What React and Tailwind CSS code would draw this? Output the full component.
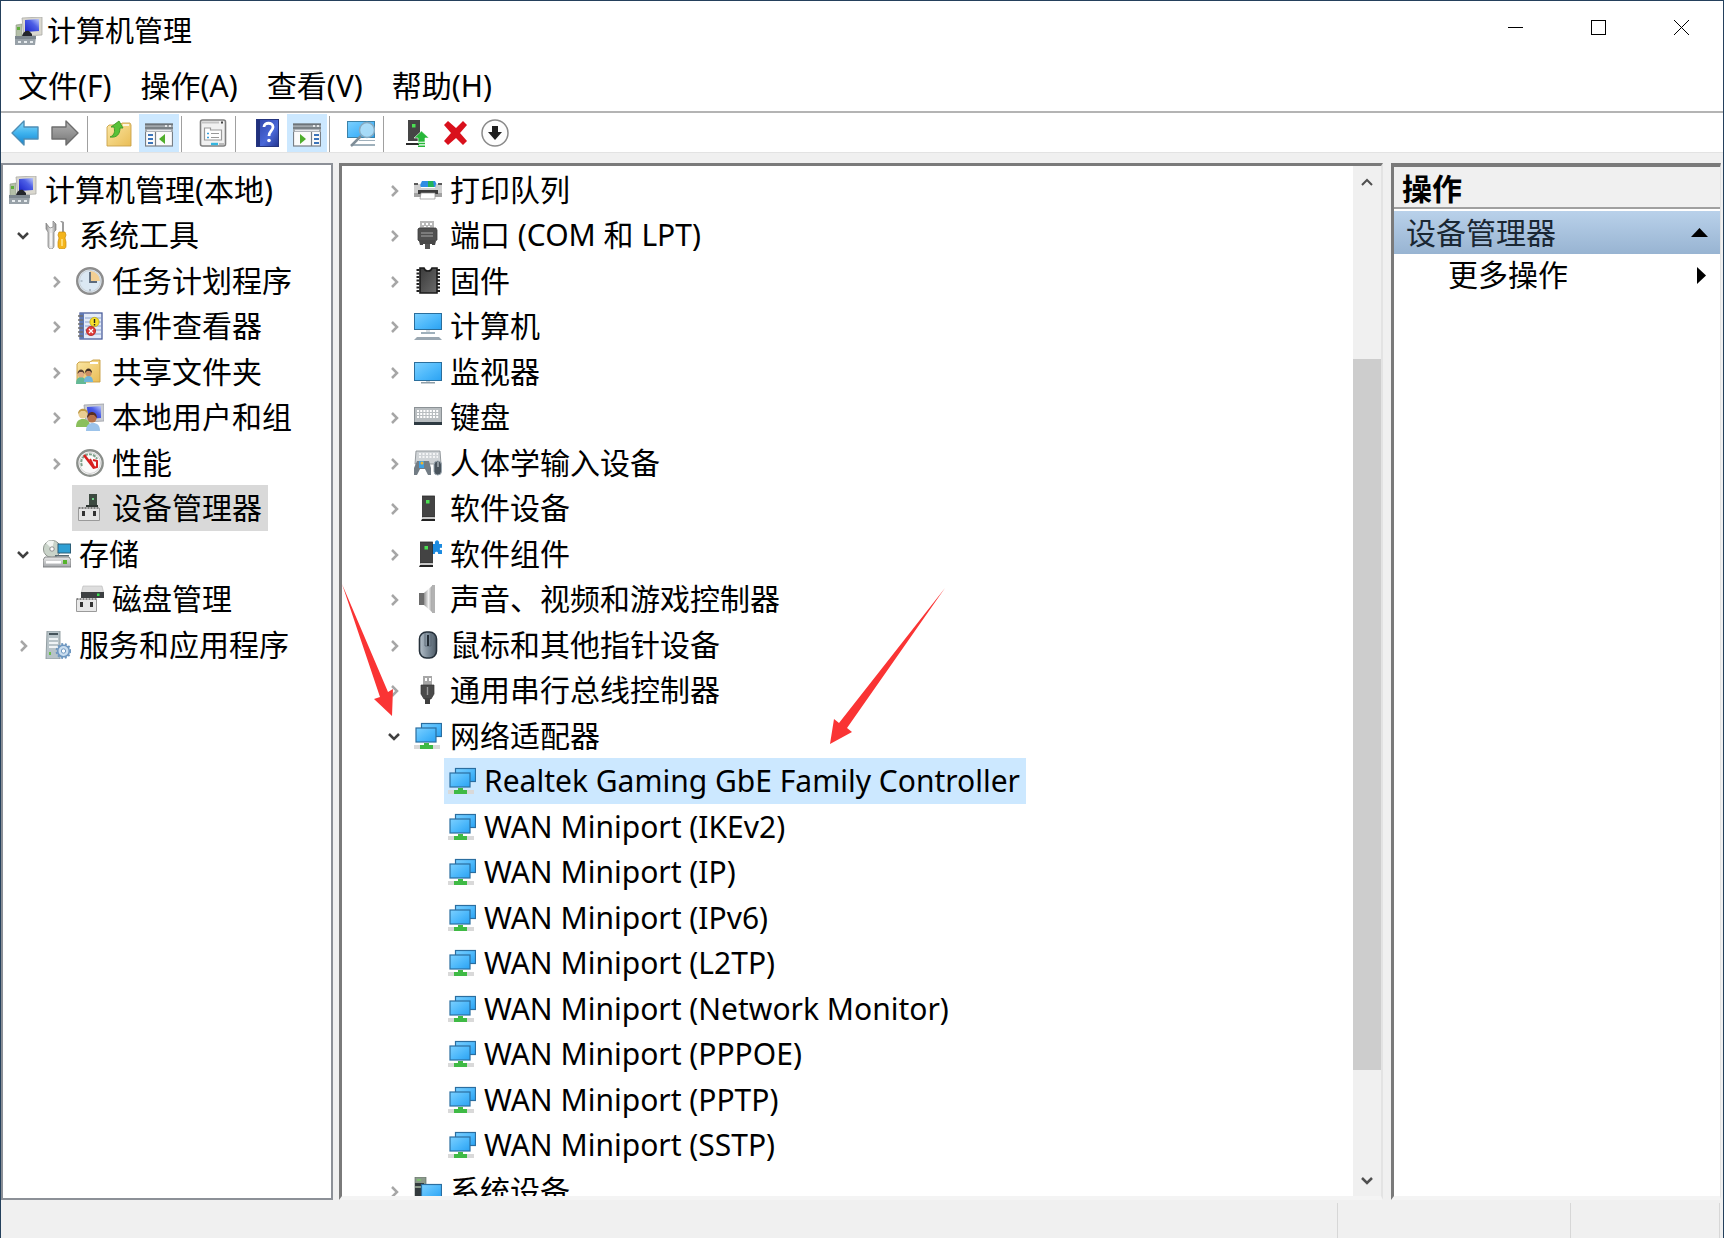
import React from 'react';

/* Shared gradients for the icon set */
const IconDefs = () => (
    <svg className="absolute h-0 w-0" aria-hidden="true">
        <defs>
            <linearGradient id="screen" x1="0" y1="0" x2="1" y2="1">
                <stop offset="0" stopColor="#7cd0ff" />
                <stop offset="0.55" stopColor="#4cb8fb" />
                <stop offset="1" stopColor="#2ba2f2" />
            </linearGradient>
            <linearGradient id="oldScreen" x1="0" y1="1" x2="1" y2="0">
                <stop offset="0" stopColor="#1a22c8" />
                <stop offset="0.6" stopColor="#4d5fe6" />
                <stop offset="1" stopColor="#b9c6fb" />
            </linearGradient>
            <linearGradient id="metal" x1="0" y1="0" x2="0" y2="1">
                <stop offset="0" stopColor="#e9e9e9" />
                <stop offset="1" stopColor="#a3a6a9" />
            </linearGradient>
            <linearGradient id="silver" x1="0" y1="0" x2="1" y2="0">
                <stop offset="0" stopColor="#8f8f8f" />
                <stop offset="0.5" stopColor="#f1f1f1" />
                <stop offset="1" stopColor="#8c8c8c" />
            </linearGradient>
            <linearGradient id="dark" x1="0" y1="0" x2="1" y2="1">
                <stop offset="0" stopColor="#3a3a3a" />
                <stop offset="1" stopColor="#6b6b6b" />
            </linearGradient>
            <linearGradient id="folder" x1="0" y1="0" x2="1" y2="1">
                <stop offset="0" stopColor="#fbe7a4" />
                <stop offset="1" stopColor="#e9bd56" />
            </linearGradient>
            <linearGradient id="blueArrow" x1="0" y1="0" x2="0" y2="1">
                <stop offset="0" stopColor="#8edcfb" />
                <stop offset="0.5" stopColor="#3fb3ee" />
                <stop offset="1" stopColor="#1583cf" />
            </linearGradient>
            <linearGradient id="greyArrow" x1="0" y1="0" x2="0" y2="1">
                <stop offset="0" stopColor="#b5b5b5" />
                <stop offset="1" stopColor="#757575" />
            </linearGradient>
            <linearGradient id="help" x1="0" y1="0" x2="1" y2="1">
                <stop offset="0" stopColor="#2f44a8" />
                <stop offset="0.6" stopColor="#4a68d8" />
                <stop offset="1" stopColor="#23358f" />
            </linearGradient>
            <linearGradient id="mouse" x1="0" y1="0" x2="1" y2="0">
                <stop offset="0" stopColor="#b4c0ca" />
                <stop offset="0.6" stopColor="#73828f" />
                <stop offset="1" stopColor="#4e5b66" />
            </linearGradient>
        </defs>
    </svg>
);

const Icon = ({ children }) => (
    <svg viewBox="0 0 28 28" className="h-7 w-7 shrink-0" aria-hidden="true">
        {children}
    </svg>
);

const ComputerManagementIcon = () => (
    <Icon>
        <path d="M1 8l6-1v13H1z" fill="#b4bfa8" stroke="#8c9682" strokeWidth="0.6" />
        <rect x="2" y="10" width="3" height="3" fill="#5fae3a" />
        <path d="M7 1l20-1v18l-18 1z" fill="#dad8cf" stroke="#a9a9a4" strokeWidth="0.8" />
        <path d="M10 3l14-1v12l-14 1z" fill="url(#oldScreen)" />
        <path d="M7 19c1-4 4-6 7-5l3 3v2z" fill="#23252b" />
        <path d="M0 20h21l-1 8H0z" fill="#98a1a8" />
        <path d="M0 19h21v3H0z" fill="#7d878f" />
        <path d="M3 24h3v2H3zM9 24h3v2H9zM15 24h3v2h-3z" fill="#e6ebee" />
    </Icon>
);

const ToolsIcon = () => (
    <Icon>
        <path d="M3 2l3 4 1 1 3-1V0l3 3v6l-2 2v14c0 2-2 3-3 3s-3-1-3-3V11L3 8z" fill="url(#silver)" stroke="#7d7d7d" strokeWidth="0.7" />
        <path d="M8 12v13" stroke="#fff" strokeWidth="1.2" />
        <path d="M17 0l2-0 2 1v10h-2V2z" fill="#9c9c9c" />
        <path d="M16 11h6l1 3-1 3 1 4v4c0 2-1 3-4 3s-4-1-4-3v-4l1-4-1-3z" fill="#f4b51c" stroke="#c98a08" strokeWidth="0.7" />
        <path d="M19 18v7" stroke="#ffe48a" strokeWidth="1.6" />
    </Icon>
);

const ClockIcon = () => (
    <Icon>
        <circle cx="14" cy="14" r="12.8" fill="#e4edf4" stroke="#8d8d8d" strokeWidth="2.4" />
        <circle cx="14" cy="14" r="10.6" fill="#dbe8f3" stroke="#c3c9cf" strokeWidth="0.8" />
        <path d="M14 14V4a10 10 0 0 1 10 10z" fill="#f2cf93" />
        <path d="M14 5v10h7" fill="none" stroke="#5b6a7c" strokeWidth="1.8" />
        <path d="M14 22v2M4.5 14h2" stroke="#8b98a6" strokeWidth="1.2" />
    </Icon>
);

const EventIcon = () => (
    <Icon>
        <rect x="4" y="1" width="22" height="26" fill="#e3ebf8" stroke="#4c5f9c" strokeWidth="1.3" />
        <path d="M9 6h16M9 10h16M9 14h16M9 18h16M9 22h16" stroke="#8ba2d0" strokeWidth="1" />
        <path d="M4 1h4v26H4z" fill="#5f78b4" />
        <path d="M2 4h5M2 8h5M2 12h5M2 16h5M2 20h5M2 24h5" stroke="#6e6e6e" strokeWidth="1.4" />
        <circle cx="18.5" cy="10" r="4.6" fill="#f5e02c" stroke="#bfa616" strokeWidth="0.8" />
        <path d="M18.500 7v4M18.500 12v1.500" stroke="#222" strokeWidth="1.4" />
        <circle cx="15" cy="19" r="4.6" fill="#dd3b38" stroke="#ad2422" strokeWidth="0.8" />
        <path d="M13 17l4 4M17 17l-4 4" stroke="#fff" strokeWidth="1.3" />
    </Icon>
);

const SharedFolderIcon = () => (
    <Icon>
        <path d="M1 6l2-2h11l3-2h7v22H1z" fill="url(#folder)" stroke="#c69c3f" strokeWidth="0.9" />
        <path d="M14 5h8" stroke="#fff" strokeWidth="2" />
        <path d="M0 26c0-5 2-7 5-7s5 2 5 7z" fill="#63b996" />
        <path d="M8 24c0-4 2-6 4.500-6s4.500 2 4.500 6z" fill="#71b5dc" />
        <circle cx="5" cy="16" r="3.4" fill="#e2ad84" />
        <path d="M1.500 16c0-6 7-6 7 0l-2-2h-3z" fill="#584132" />
        <circle cx="12.5" cy="15" r="3.2" fill="#c98d62" />
        <path d="M9 15c0-6 7-6 7 0l-2-2h-3z" fill="#3c2d22" />
    </Icon>
);

const UsersIcon = () => (
    <Icon>
        <path d="M8 2l20-1v17l-18 1z" fill="#c9ccd2" stroke="#9a9da3" strokeWidth="0.8" />
        <path d="M11 4l14-1v12l-13 1z" fill="url(#oldScreen)" />
        <circle cx="7" cy="11" r="4.6" fill="#e9cd92" />
        <path d="M2 11C2 4 12 4 12 11l-3-3H5z" fill="#c09a44" />
        <path d="M0 24c0-6 3-8 7-8s7 2 7 8z" fill="#8abf5c" />
        <circle cx="16" cy="15" r="4.6" fill="#b67249" />
        <path d="M11 15c0-8 10-8 10 0l-3-3h-4z" fill="#5a2f22" />
        <path d="M10 28c0-6 3-8 7-8s7 2 7 8z" fill="#9cc3ea" />
    </Icon>
);

const PerformanceIcon = () => (
    <Icon>
        <circle cx="14" cy="14" r="12.7" fill="#fff" stroke="#8b8f8b" strokeWidth="2.4" />
        <circle cx="14" cy="14" r="10.5" fill="#fafafa" stroke="#d2d2d2" strokeWidth="1" />
        <path d="M6 17a8 8 0 0 1 15-7" fill="none" stroke="#7fa08a" strokeWidth="2" strokeDasharray="3 1" />
        <path d="M8 6l10 13" stroke="#d81f1f" strokeWidth="2.6" />
        <path d="M14 10l4 8M17 11l4 1v6l-4 1" fill="none" stroke="#d81f1f" strokeWidth="2" />
    </Icon>
);

const DeviceManagerIcon = () => (
    <Icon>
        <rect x="13" y="0" width="8" height="13" fill="#3d4a41" />
        <rect x="16" y="4" width="2" height="2" fill="#6fd387" />
        <path d="M10 11h12v2H10z" fill="#2f3632" />
        <rect x="2.5" y="14" width="21" height="12.5" fill="#e4e4e4" />
        <path d="M2.500 14h21" stroke="#5f5f5f" strokeWidth="1.4" strokeDasharray="2 1" />
        <path d="M2.500 14v12.500h21V14" fill="none" stroke="#9a9a9a" strokeWidth="1" />
        <rect x="6" y="17" width="3" height="5" fill="#333" />
        <rect x="17" y="17" width="3" height="5" fill="#333" />
    </Icon>
);

const StorageIcon = () => (
    <Icon>
        <circle cx="9" cy="9" r="8.6" fill="#c9d3c9" stroke="#8f968f" strokeWidth="1" />
        <path d="M9 9L3 3a8 8 0 0 1 8-2z" fill="#f3f6f3" />
        <circle cx="9" cy="9" r="2.2" fill="#fff" stroke="#777" strokeWidth="0.8" />
        <rect x="15" y="4" width="12.5" height="9" fill="#2f9fd4" stroke="#2c5f78" strokeWidth="1" />
        <path d="M12 15h14v1.500H12z" fill="#596a74" />
        <path d="M2 17h24l2 3v7H0v-7z" fill="url(#metal)" stroke="#77797b" strokeWidth="0.9" />
        <rect x="3" y="21" width="15" height="2.5" fill="#fff" />
        <rect x="20" y="20" width="4" height="4" fill="#56b32c" />
    </Icon>
);

const DiskIcon = () => (
    <Icon>
        <path d="M7 1h19l2 8H5z" fill="#dedede" stroke="#b5b5b5" strokeWidth="0.6" />
        <rect x="5" y="7" width="23" height="6" fill="#3c3f41" />
        <rect x="21" y="8.5" width="2.5" height="2.5" fill="#3cdc53" />
        <rect x="0.5" y="14" width="20" height="12.5" fill="#e8e8e8" />
        <path d="M0.500 14h20" stroke="#5f5f5f" strokeWidth="1.4" strokeDasharray="2 1" />
        <path d="M0.500 14v12.500h20V14" fill="none" stroke="#9a9a9a" strokeWidth="1" />
        <rect x="4" y="17" width="3" height="5" fill="#333" />
        <rect x="14" y="17" width="3" height="5" fill="#333" />
    </Icon>
);

const ServicesIcon = () => (
    <Icon>
        <path d="M4 0h13v28H3z" fill="#b7c3c8" stroke="#8a969b" strokeWidth="0.9" />
        <rect x="6" y="2" width="9" height="2" fill="#44535a" />
        <path d="M6 8h9M6 12h9M6 16h9" stroke="#eef3f5" strokeWidth="1.8" />
        <rect x="6" y="21" width="2" height="3" fill="#6bbf4a" />
        <circle cx="20.5" cy="20" r="5.8" fill="#c9ddef" stroke="#6e97c0" strokeWidth="1.6" />
        <circle cx="20.5" cy="20" r="7" fill="none" stroke="#6e97c0" strokeWidth="1.8" strokeDasharray="2 1.8" />
        <circle cx="20.5" cy="20" r="2.2" fill="#fff" stroke="#6e97c0" strokeWidth="1" />
    </Icon>
);

const PrinterIcon = () => (
    <Icon>
        <path d="M8 5h13l3 6H5z" fill="#2f8de4" />
        <path d="M14 5h5l1 6h-6z" fill="#23b35a" />
        <path d="M0 8h6l1 4h14l1-4h6v10H0z" fill="#cfcfcf" />
        <path d="M0 17h28v4H0z" fill="#a2a2a2" />
        <path d="M0 7h4v2H0zM24 7h4v2h-4z" fill="#5a5a5a" />
        <path d="M4 14h20v4H4z" fill="#3c3c3c" />
        <path d="M7 17h14v6H6z" fill="#fff" stroke="#8c8c8c" strokeWidth="0.7" />
    </Icon>
);

const PortIcon = () => (
    <Icon>
        <path d="M6 0h14v8H6z" fill="#b8b8b8" />
        <path d="M8 2h2v2H8zM12 2h2v2h-2zM16 2h2v2h-2zM10 5h2v1h-2zM14 5h2v1h-2z" fill="#fff" />
        <path d="M5 7h17l1 2v10l-2 1H5l-1-1V8z" fill="#505050" stroke="#3d3d3d" strokeWidth="0.8" />
        <path d="M7 12h12M7 15h12" stroke="#a5a5a5" strokeWidth="1" />
        <path d="M5 20h4v4H6zM18 20h4l-1 4h-3zM9 20h9v3H9z" fill="#474747" />
        <rect x="11" y="23" width="5" height="5" fill="#555" />
    </Icon>
);

const ChipIcon = () => (
    <Icon>
        <path d="M4 2v24M24.500 2v24" stroke="#222" strokeWidth="3" strokeDasharray="2 1.5" />
        <path d="M6 1h4c1 4 7 4 8 0h5v25H6z" fill="url(#dark)" stroke="#1b1b1b" strokeWidth="1.6" />
    </Icon>
);

const ComputerIcon = () => (
    <Icon>
        <rect x="0.5" y="1.5" width="27" height="16" fill="url(#screen)" stroke="#2a6e9c" strokeWidth="1" />
        <path d="M7 20h14v2H7z" fill="#9fb0bb" />
        <path d="M12 18h4v2h-4z" fill="#d6dde2" />
        <path d="M3 25h22l3 3H0z" fill="#9aa7b1" />
    </Icon>
);

const MonitorIcon = () => (
    <Icon>
        <rect x="0.5" y="4.5" width="27" height="18" fill="url(#screen)" stroke="#2a6e9c" strokeWidth="1" />
        <path d="M12 23h4v1h-4z" fill="#c6d0d6" />
        <path d="M7 24h14v1.500H7z" fill="#8f9ea8" />
    </Icon>
);

const KeyboardIcon = () => (
    <Icon>
        <rect x="0.5" y="4.5" width="27" height="15" fill="#b8bdc0" stroke="#8b9195" strokeWidth="1" />
        <path d="M3 8h22M3 11h22M3 14h22" stroke="#fff" strokeWidth="1.8" strokeDasharray="2 1.2" />
        <path d="M0 19h28v3H0z" fill="#2e3a42" />
    </Icon>
);

const HumanInterfaceIcon = () => (
    <Icon>
        <path d="M2 2h24l1 13H1z" fill="#cfd3d6" stroke="#8b9195" strokeWidth="0.9" />
        <path d="M5 5h19M5 8h19" stroke="#fff" strokeWidth="1.5" strokeDasharray="2 1.5" />
        <path d="M3 12h12l2 7v7h-3l-3-6H6l-3 6H0v-7z" fill="#727c84" />
        <path d="M5 12h5v7H5z" fill="#3fa0e2" />
        <circle cx="8" cy="14" r="1.5" fill="#f1b32c" />
        <rect x="20" y="12" width="7.5" height="14" rx="3.7" fill="#49545d" stroke="#9aa6af" strokeWidth="1" />
        <path d="M24 13v5" stroke="#d0d8de" strokeWidth="1" />
    </Icon>
);

const SoftwareDeviceIcon = () => (
    <Icon>
        <rect x="8.5" y="2" width="12" height="21" fill="#434343" stroke="#2a2a2a" strokeWidth="0.8" />
        <rect x="12" y="6" width="3.5" height="3.5" fill="#4be052" />
        <path d="M9 23h11l1 2H8z" fill="#c8c8c8" />
        <path d="M8 25h13v2H7z" fill="#222" />
    </Icon>
);

const SoftwareComponentIcon = () => (
    <Icon>
        <path d="M17 4h4c-1-5 5-5 4 0h3v4c-3-1-3 3 0 2v4h-4c1-3-4-3-3 0h-4z" fill="#1c8be0" />
        <rect x="6.5" y="2" width="12" height="21" fill="#434343" stroke="#2a2a2a" strokeWidth="0.8" />
        <rect x="10.5" y="6" width="3.5" height="3.5" fill="#4be052" />
        <path d="M7 23h11l1 2H6z" fill="#c8c8c8" />
        <path d="M6 25h13v2H5z" fill="#222" />
    </Icon>
);

const SpeakerIcon = () => (
    <Icon>
        <path d="M5 8h5v12H5z" fill="#6c6c6c" />
        <path d="M10 8l9-8v28l-9-8z" fill="url(#silver)" />
        <path d="M18 0h3v28h-3z" fill="#b2b2b2" />
    </Icon>
);

const MouseIcon = () => (
    <Icon>
        <rect x="5.5" y="1" width="17" height="26" rx="7" fill="url(#mouse)" stroke="#25303a" strokeWidth="1.6" />
        <path d="M11 2v13h6V2" fill="none" stroke="#55636f" strokeWidth="0.8" />
        <path d="M14 4v11" stroke="#222c35" strokeWidth="2" />
    </Icon>
);

const UsbIcon = () => (
    <Icon>
        <path d="M9 0h9v9H9z" fill="#a7a7a7" />
        <path d="M11 2h2v3h-2zM15 2h2v3h-2z" fill="#fff" />
        <path d="M7 9h13v9l-3 5h-7l-3-5z" fill="#4a4a4a" stroke="#333" strokeWidth="0.7" />
        <path d="M13.500 11v8" stroke="#9a9a9a" strokeWidth="1.4" />
        <rect x="11" y="22" width="5" height="6" fill="#3f3f3f" />
    </Icon>
);

const NetworkIcon = () => (
    <Icon>
        <rect x="7.5" y="1.5" width="20" height="13" fill="url(#screen)" stroke="#2b6ea0" strokeWidth="1.2" />
        <path d="M0 23h26v4H0z" fill="#d9d9d9" />
        <rect x="2" y="6" width="20" height="14" fill="url(#screen)" stroke="#2b6ea0" strokeWidth="1.2" />
        <path d="M10 21h5v2h4v4H6v-4h4z" fill="#3fba45" />
    </Icon>
);

const SystemIcon = () => (
    <Icon>
        <path d="M1 0h11v28H1z" fill="#8b9a8b" stroke="#66706a" strokeWidth="0.7" />
        <rect x="3" y="2" width="4" height="2" fill="#7fbf70" />
        <path d="M1 6h9v3H1zM1 11h6v12H1z" fill="#333a3d" />
        <rect x="7.5" y="7.5" width="20" height="14" fill="url(#screen)" stroke="#2b6ea0" strokeWidth="1.2" />
    </Icon>
);

/* Toolbar icons */
const BackIcon = () => (
    <Icon>
        <path d="M1 14L13 2v6h14v12H13v6z" fill="url(#blueArrow)" stroke="#4d8db5" strokeWidth="1.4" strokeLinejoin="round" />
    </Icon>
);

const ForwardIcon = () => (
    <Icon>
        <path d="M27 14L15 2v6H1v12h14v6z" fill="url(#greyArrow)" stroke="#6d6d6d" strokeWidth="1.4" strokeLinejoin="round" />
    </Icon>
);

const FolderUpIcon = () => (
    <Icon>
        <path d="M2 8l2-2h11l2-2h8l1 2v21H2z" fill="url(#folder)" stroke="#c9a24a" strokeWidth="0.9" />
        <path d="M18 6h6" stroke="#fff" strokeWidth="1.5" />
        <path d="M5 18c5-2 5-6 4-10H6l8-6 4 7h-3c0 6-3 10-10 9z" fill="#58c238" stroke="#3d9726" strokeWidth="0.9" />
    </Icon>
);

const PaneFrame = () => (
    <>
        <rect x="0.5" y="5" width="27" height="22" fill="#fbfbfb" stroke="#777e85" strokeWidth="1.2" />
        <path d="M0 5h28v8H0z" fill="#a3a9ae" />
        <path d="M0 5.500h28M0 9h28" stroke="#6d747a" strokeWidth="1.4" />
        <path d="M2 11.500h24" stroke="#e8eaec" strokeWidth="1.4" />
        <path d="M20 7h2M24 7h2" stroke="#fff" strokeWidth="1.4" />
    </>
);

const TreePaneIcon = () => (
    <Icon>
        <PaneFrame />
        <path d="M10.500 13v14" stroke="#777e85" strokeWidth="1.2" />
        <path d="M3 16h5M3 20h5M3 24h5" stroke="#3c74b9" strokeWidth="1.8" />
        <path d="M20 15v10l-6-5z" fill="#4fae2c" />
    </Icon>
);

const ActionPaneIcon = () => (
    <Icon>
        <PaneFrame />
        <path d="M18.500 13v14" stroke="#777e85" strokeWidth="1.2" />
        <path d="M21 16h5M21 20h5M21 24h5" stroke="#3c74b9" strokeWidth="1.8" />
        <path d="M7 15v10l6-5z" fill="#4fae2c" />
    </Icon>
);

const PropertiesIcon = () => (
    <Icon>
        <rect x="1.5" y="1" width="25" height="26" rx="2" fill="#f1f1f1" stroke="#7f7f7f" strokeWidth="1.6" />
        <path d="M3 3.500h17" stroke="#c4c4c4" strokeWidth="2" />
        <path d="M22 3.500h2" stroke="#444" strokeWidth="2" />
        <path d="M5.500 9h6v2h11v10h-17z" fill="#fff" stroke="#9a9a9a" strokeWidth="1.2" />
        <path d="M8 14.500h2M8 18.500h2" stroke="#3aa0dc" strokeWidth="1.6" />
        <path d="M12 14.500h8M12 18.500h8" stroke="#999" strokeWidth="1.2" />
        <path d="M12 25h7" stroke="#35b6e0" strokeWidth="2.4" />
        <path d="M20 25h5" stroke="#bbb" strokeWidth="2" />
    </Icon>
);

const HelpIcon = () => (
    <Icon>
        <rect x="3.5" y="0.5" width="22" height="27" fill="url(#help)" stroke="#25357f" strokeWidth="1" />
        <path d="M4 1h3v26H4z" fill="#20307d" />
        <path d="M11 8c0-5 9-5 9 0 0 4-4 4-4 9" fill="none" stroke="#fff" strokeWidth="2.8" />
        <circle cx="16" cy="21.5" r="1.8" fill="#fff" />
    </Icon>
);

const ScanIcon = () => (
    <Icon>
        <rect x="0.5" y="2.5" width="27" height="16" fill="url(#screen)" stroke="#3c82a8" strokeWidth="1" />
        <path d="M12 21h16v1H12zM4 25h24v2H4z" fill="#9fb0bb" />
        <circle cx="20" cy="11" r="7.5" fill="#b9e2f7" fillOpacity="0.85" stroke="#86abc2" strokeWidth="1.5" />
        <path d="M14 17L4 27" stroke="#7f8d97" strokeWidth="2.5" />
    </Icon>
);

const UpdateDriverIcon = () => (
    <Icon>
        <rect x="7" y="1" width="12" height="21" fill="#454545" />
        <rect x="11" y="5" width="3.5" height="3.5" fill="#4be052" />
        <path d="M5 24h13v2H5z" fill="#2a2a2a" />
        <path d="M20.500 12l7.500 7h-4v4h-7v-4h-4z" fill="#27b739" stroke="#fff" strokeWidth="0.6" />
        <path d="M17 24.500h7M17 27.200h7" stroke="#27b739" strokeWidth="1.5" />
    </Icon>
);

const UninstallIcon = () => (
    <Icon>
        <path d="M3 6l4-4 8 7 7-7 4 4-7 8 7 8-4 4-7-7-8 7-4-4 7-8z" fill="#d9101c" />
    </Icon>
);

const DisableIcon = () => (
    <Icon>
        <circle cx="14" cy="14" r="13" fill="#fdfdfd" stroke="#8a8a8a" strokeWidth="1.5" />
        <path d="M11 7h6v6h4l-7 8-7-8h4z" fill="#1e1e1e" />
    </Icon>
);

const Chevron = ({ open }) => (
    <svg viewBox="0 0 20 20" className="h-5 w-5" aria-hidden="true" fill="none">
        {open ? (
            <path d="M5 8l5 5 5-5" stroke="#404040" strokeWidth="2.5" />
        ) : (
            <path d="M8 6l5 5-5 5" stroke="#a6a6a6" strokeWidth="2.5" />
        )}
    </svg>
);

const toolGroups = [
    [
        { label: '后退', icon: BackIcon },
        { label: '前进', icon: ForwardIcon },
    ],
    [
        { label: '上一级', icon: FolderUpIcon },
        { label: '显示/隐藏控制台树', icon: TreePaneIcon, active: true },
    ],
    [{ label: '属性', icon: PropertiesIcon }],
    [
        { label: '帮助', icon: HelpIcon },
        { label: '显示/隐藏操作窗格', icon: ActionPaneIcon, active: true },
    ],
    [{ label: '扫描检测硬件改动', icon: ScanIcon }],
    [
        { label: '更新驱动程序', icon: UpdateDriverIcon },
        { label: '卸载设备', icon: UninstallIcon },
        { label: '禁用设备', icon: DisableIcon },
    ],
];

const menus = ['文件(F)', '操作(A)', '查看(V)', '帮助(H)'];

const consoleTree = [
    { text: '计算机管理(本地)', icon: ComputerManagementIcon, level: 0 },
    { text: '系统工具', icon: ToolsIcon, level: 1, toggle: 'open' },
    { text: '任务计划程序', icon: ClockIcon, level: 2, toggle: 'closed' },
    { text: '事件查看器', icon: EventIcon, level: 2, toggle: 'closed' },
    { text: '共享文件夹', icon: SharedFolderIcon, level: 2, toggle: 'closed' },
    { text: '本地用户和组', icon: UsersIcon, level: 2, toggle: 'closed' },
    { text: '性能', icon: PerformanceIcon, level: 2, toggle: 'closed' },
    { text: '设备管理器', icon: DeviceManagerIcon, level: 2, selected: 'bg-[#d9d9d9]' },
    { text: '存储', icon: StorageIcon, level: 1, toggle: 'open' },
    { text: '磁盘管理', icon: DiskIcon, level: 2 },
    { text: '服务和应用程序', icon: ServicesIcon, level: 1, toggle: 'closed' },
];

const adapters = [
    'WAN Miniport (IKEv2)',
    'WAN Miniport (IP)',
    'WAN Miniport (IPv6)',
    'WAN Miniport (L2TP)',
    'WAN Miniport (Network Monitor)',
    'WAN Miniport (PPPOE)',
    'WAN Miniport (PPTP)',
    'WAN Miniport (SSTP)',
];

const deviceTree = [
    { text: '打印队列', icon: PrinterIcon, level: 3, toggle: 'closed' },
    { text: '端口 (COM 和 LPT)', icon: PortIcon, level: 3, toggle: 'closed' },
    { text: '固件', icon: ChipIcon, level: 3, toggle: 'closed' },
    { text: '计算机', icon: ComputerIcon, level: 3, toggle: 'closed' },
    { text: '监视器', icon: MonitorIcon, level: 3, toggle: 'closed' },
    { text: '键盘', icon: KeyboardIcon, level: 3, toggle: 'closed' },
    { text: '人体学输入设备', icon: HumanInterfaceIcon, level: 3, toggle: 'closed' },
    { text: '软件设备', icon: SoftwareDeviceIcon, level: 3, toggle: 'closed' },
    { text: '软件组件', icon: SoftwareComponentIcon, level: 3, toggle: 'closed' },
    { text: '声音、视频和游戏控制器', icon: SpeakerIcon, level: 3, toggle: 'closed' },
    { text: '鼠标和其他指针设备', icon: MouseIcon, level: 3, toggle: 'closed' },
    { text: '通用串行总线控制器', icon: UsbIcon, level: 3, toggle: 'closed' },
    { text: '网络适配器', icon: NetworkIcon, level: 3, toggle: 'open' },
    { text: 'Realtek Gaming GbE Family Controller', icon: NetworkIcon, level: 4, selected: 'bg-[#cce8ff]' },
    ...adapters.map((text) => ({ text, icon: NetworkIcon, level: 4 })),
    { text: '系统设备', icon: SystemIcon, level: 3, toggle: 'closed' },
];

const indents = ['pl-[2px]', 'pl-[10px]', 'pl-[43px]', 'pl-[42px]', 'pl-[76px]'];

const TreeRow = ({ text, icon: RowIcon, level, toggle, selected }) => (
    <li className={`flex shrink-0 items-stretch odd:h-[45px] even:h-[46px] ${indents[level]}`}>
        {level > 0 && (
            <span className="mr-[6px] flex w-5 items-center">
                {toggle && (
                    <button type="button" aria-label={`${toggle === 'open' ? '折叠' : '展开'} ${text}`}>
                        <Chevron open={toggle === 'open'} />
                    </button>
                )}
            </span>
        )}
        <button type="button" className={`flex items-center gap-2 whitespace-nowrap pl-1 pr-[6px] ${selected || ''}`}>
            <RowIcon />
            <span>{text}</span>
        </button>
    </li>
);

const TitleBar = () => (
    <header className="flex h-[62px] shrink-0 items-start justify-between">
        <div className="flex h-[60px] items-center gap-1 pl-[14px]">
            <ComputerManagementIcon />
            <h1 className="text-[29px] leading-9">计算机管理</h1>
        </div>
        <div className="flex">
            <button type="button" aria-label="最小化" className="flex h-[53px] w-[83px] items-center justify-center">
                <svg viewBox="0 0 15 15" className="h-[15px] w-[15px]" shapeRendering="crispEdges">
                    <path d="M0 7.500h15" stroke="#000" />
                </svg>
            </button>
            <button type="button" aria-label="最大化" className="flex h-[53px] w-[83px] items-center justify-center">
                <svg viewBox="0 0 15 15" className="h-[15px] w-[15px]" shapeRendering="crispEdges">
                    <path d="M0.500 0.500h14v14h-14z" fill="none" stroke="#000" />
                </svg>
            </button>
            <button type="button" aria-label="关闭" className="flex h-[53px] w-[83px] items-center justify-center">
                <svg viewBox="0 0 15 15" className="h-[15px] w-[15px]">
                    <path d="M0 0l15 15M15 0L0 15" stroke="#000" />
                </svg>
            </button>
        </div>
    </header>
);

const Toolbar = () => (
    <div className="flex h-10 shrink-0 items-stretch border-b border-[#e3e3e3] pl-1 pt-px">
        {toolGroups.map((group, index) => (
            <div key={group[0].label} className="flex">
                {index > 0 && <span className="ml-[2px] mr-[11px] mt-[2px] w-px bg-[#a0a0a0]" />}
                {group.map(({ label, icon: ToolIcon, active }) => (
                    <button
                        key={label}
                        type="button"
                        aria-label={label}
                        className={`flex w-10 items-center justify-center ${active ? 'bg-[#cce8ff]' : ''}`}
                    >
                        <ToolIcon />
                    </button>
                ))}
            </div>
        ))}
    </div>
);

const ScrollBar = () => (
    <div className="flex w-7 shrink-0 flex-col bg-[#f0f0f0] pb-px pt-[2px]">
        <button type="button" aria-label="向上滚动" className="flex h-7 items-center justify-center">
            <svg viewBox="0 0 12 8" className="h-2 w-3" fill="none">
                <path d="M1 7l5-5 5 5" stroke="#505050" strokeWidth="2" />
            </svg>
        </button>
        <div className="flex-[163]" />
        <div className="flex-[711] bg-[#cdcdcd]" />
        <div className="flex-[97]" />
        <button type="button" aria-label="向下滚动" className="flex h-7 items-center justify-center">
            <svg viewBox="0 0 12 8" className="h-2 w-3" fill="none">
                <path d="M1 1l5 5 5-5" stroke="#505050" strokeWidth="2.5" />
            </svg>
        </button>
    </div>
);

const ActionsPane = () => (
    <aside className="flex w-[330px] shrink-0 flex-col border-b-4 border-l-[3px] border-r border-t-4 border-b-[#f4f4f4] border-l-[#7a7a7a] border-r-[#e3e3e3] border-t-[#7a7a7a] bg-white">
        <h2 className="mb-[2px] h-[42px] border-b-2 border-[#a0a0a0] bg-[#f0f0f0] pl-2 font-bold leading-[44px]">操作</h2>
        <button type="button" className="flex h-[43px] items-center justify-between bg-gradient-to-b from-[#b9d1ea] to-[#98b4d2] pl-3 pr-3 text-[#1a2733]">
            <span>设备管理器</span>
            <svg viewBox="0 0 17 9" className="h-[9px] w-[17px]">
                <path d="M0 9l8.500-9L17 9z" fill="#000" />
            </svg>
        </button>
        <button type="button" className="flex h-[42px] items-center justify-between pl-[54px] pr-[14px]">
            <span>更多操作</span>
            <svg viewBox="0 0 9 17" className="h-[17px] w-[9px]">
                <path d="M0 0l9 8.500L0 17z" fill="#000" />
            </svg>
        </button>
    </aside>
);

const App = () => {
    return (
        <div className="flex h-screen flex-col overflow-hidden border-x border-t border-[#24405c] bg-white font-['Noto_Sans','Noto_Sans_CJK_SC',sans-serif] text-[30px] leading-10 text-black">
            <IconDefs />
            <TitleBar />
            <nav className="flex h-[50px] shrink-0 items-center gap-[29px] border-b-2 border-[#b4b4b4] pb-[2px] pl-[17px]">
                {menus.map((menu) => (
                    <button key={menu} type="button">
                        {menu}
                    </button>
                ))}
            </nav>
            <Toolbar />

            <main className="flex min-h-0 flex-1 bg-[#f0f0f0] pr-[2px] pt-[10px]">
                {/* Console tree */}
                <section className="w-[332px] shrink-0 overflow-hidden border-2 border-[#8c9097] bg-white pt-[2px]">
                    <ul>
                        {consoleTree.map((row) => (
                            <TreeRow key={row.text} {...row} />
                        ))}
                    </ul>
                </section>

                {/* Device list */}
                <section className="relative ml-[6px] mr-2 flex min-w-0 flex-1 overflow-hidden border-b-4 border-l-[3px] border-r-2 border-t-[3px] border-b-[#f4f4f4] border-l-[#7a7a7a] border-r-[#e3e3e3] border-t-[#7a7a7a] bg-white">
                    <ul className="flex min-w-0 flex-1 flex-col overflow-hidden pt-px">
                        {deviceTree.map((row) => (
                            <TreeRow key={row.text} {...row} />
                        ))}
                    </ul>
                    <ScrollBar />
                    {/* Red pointers over the list */}
                    <svg viewBox="0 0 620 600" className="pointer-events-none absolute left-0 top-0 h-[600px] w-[620px]" aria-hidden="true">
                        <path d="M0 418L38 531l-6 2 18 17 1-27-5 3z" fill="#fa3434" />
                        <path d="M603 422L497 557l-5-4-4 25 22-12-5-4z" fill="#fa3434" />
                    </svg>
                </section>

                <ActionsPane />
            </main>

            <footer className="flex h-[38px] shrink-0 items-stretch bg-[#f0f0f0] pr-[3px] pt-[3px]">
                <div className="flex-1 border-r border-[#d7d7d7]" />
                <div className="w-[233px] border-r border-[#d7d7d7]" />
                <div className="w-[149px] border-r border-[#d7d7d7]" />
            </footer>
        </div>
    );
};

export default App;
